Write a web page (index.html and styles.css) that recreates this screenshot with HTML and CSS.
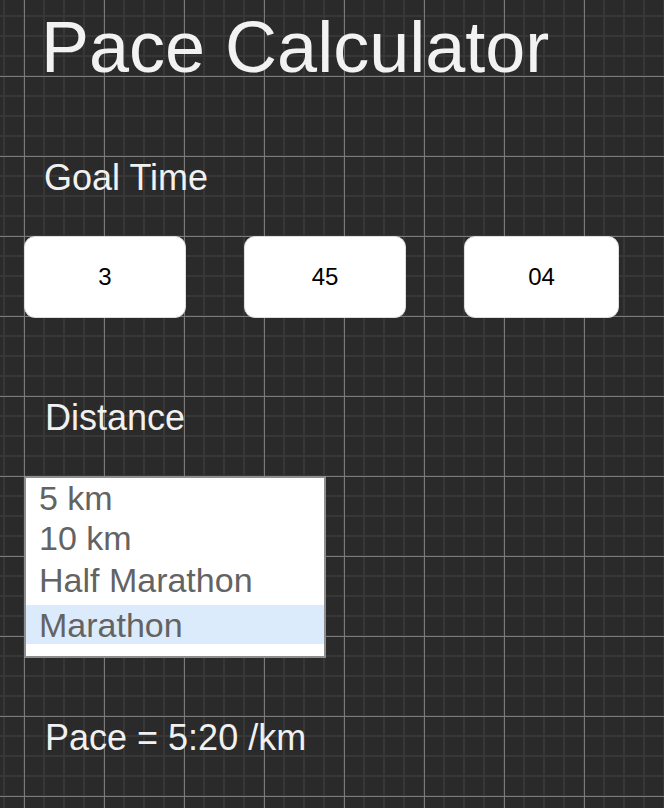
FILE: index.html
```html
<!DOCTYPE html>
<html lang="en">
<head>
<meta charset="utf-8">
<title>Pace Calculator</title>
<link rel="stylesheet" href="styles.css">
</head>
<body>
<main class="page">
  <h1 class="title">Pace Calculator</h1>
  <h2 class="label goal-label">Goal Time</h2>
  <div class="time-row">
    <div class="time-box">3</div>
    <div class="time-box">45</div>
    <div class="time-box narrow">04</div>
  </div>
  <h2 class="label distance-label">Distance</h2>
  <div class="listbox">
    <div class="opt opt-1">5 km</div>
    <div class="opt opt-2">10 km</div>
    <div class="opt opt-3">Half Marathon</div>
    <div class="opt opt-sel">Marathon</div>
  </div>
  <p class="label result">Pace = 5:20 /km</p>
</main>
</body>
</html>
```
FILE: styles.css
```css
html, body {
  margin: 0;
  padding: 0;
}

body {
  min-height: 808px;
  background-color: #2a2a2a;
  background-image:
    linear-gradient(90deg, #7a7a7a 1px, transparent 1px),
    linear-gradient(180deg, #7a7a7a 1px, transparent 1px),
    linear-gradient(90deg, #373737 2px, transparent 2px),
    linear-gradient(180deg, #373737 2px, transparent 2px);
  background-size: 80px 80px, 80px 80px, 20px 20px, 20px 20px;
  background-position: 24px 0, 0 76px, 23px 0, 0 75px;
  font-family: "Liberation Sans", Arial, sans-serif;
  color: #f1f1f1;
}

.page {
  padding: 0 24px;
  display: flex;
  flex-direction: column;
  align-items: flex-start;
}

.title {
  margin: 6px 0 0 17px;
  font-size: 72px;
  line-height: 82px;
  font-weight: normal;
  color: #f2f2f2;
}

.label {
  margin: 0;
  font-size: 36px;
  line-height: 40px;
  font-weight: normal;
  color: #f1f1f1;
}

.goal-label {
  margin-top: 70px;
  padding-left: 20px;
}

.time-row {
  margin-top: 38px;
  display: flex;
  gap: 58px;
}

.time-box {
  box-sizing: border-box;
  width: 162px;
  height: 82px;
  background: #ffffff;
  border: 1px solid #dcdcdc;
  border-radius: 11px;
  display: flex;
  align-items: center;
  justify-content: center;
  font-size: 24px;
  color: #000000;
}

.time-box.narrow {
  width: 155px;
}

.distance-label {
  margin-top: 80px;
  padding-left: 21px;
}

.listbox {
  margin-top: 38px;
  box-sizing: border-box;
  width: 302px;
  height: 182px;
  background: #ffffff;
  border: 2px solid #8e8e8e;
  font-size: 34px;
  color: #636363;
  display: flex;
  flex-direction: column;
}

.opt {
  padding-left: 13px;
  line-height: 40px;
  height: 40px;
}

.opt-2 {
  height: 42px;
}

.opt-3 {
  height: 45px;
}

.opt-sel {
  height: 39px;
  line-height: 38px;
  padding-top: 1px;
  box-sizing: border-box;
  background: #dcebfb;
}

.result {
  margin-top: 60px;
  padding-left: 21px;
}
```
